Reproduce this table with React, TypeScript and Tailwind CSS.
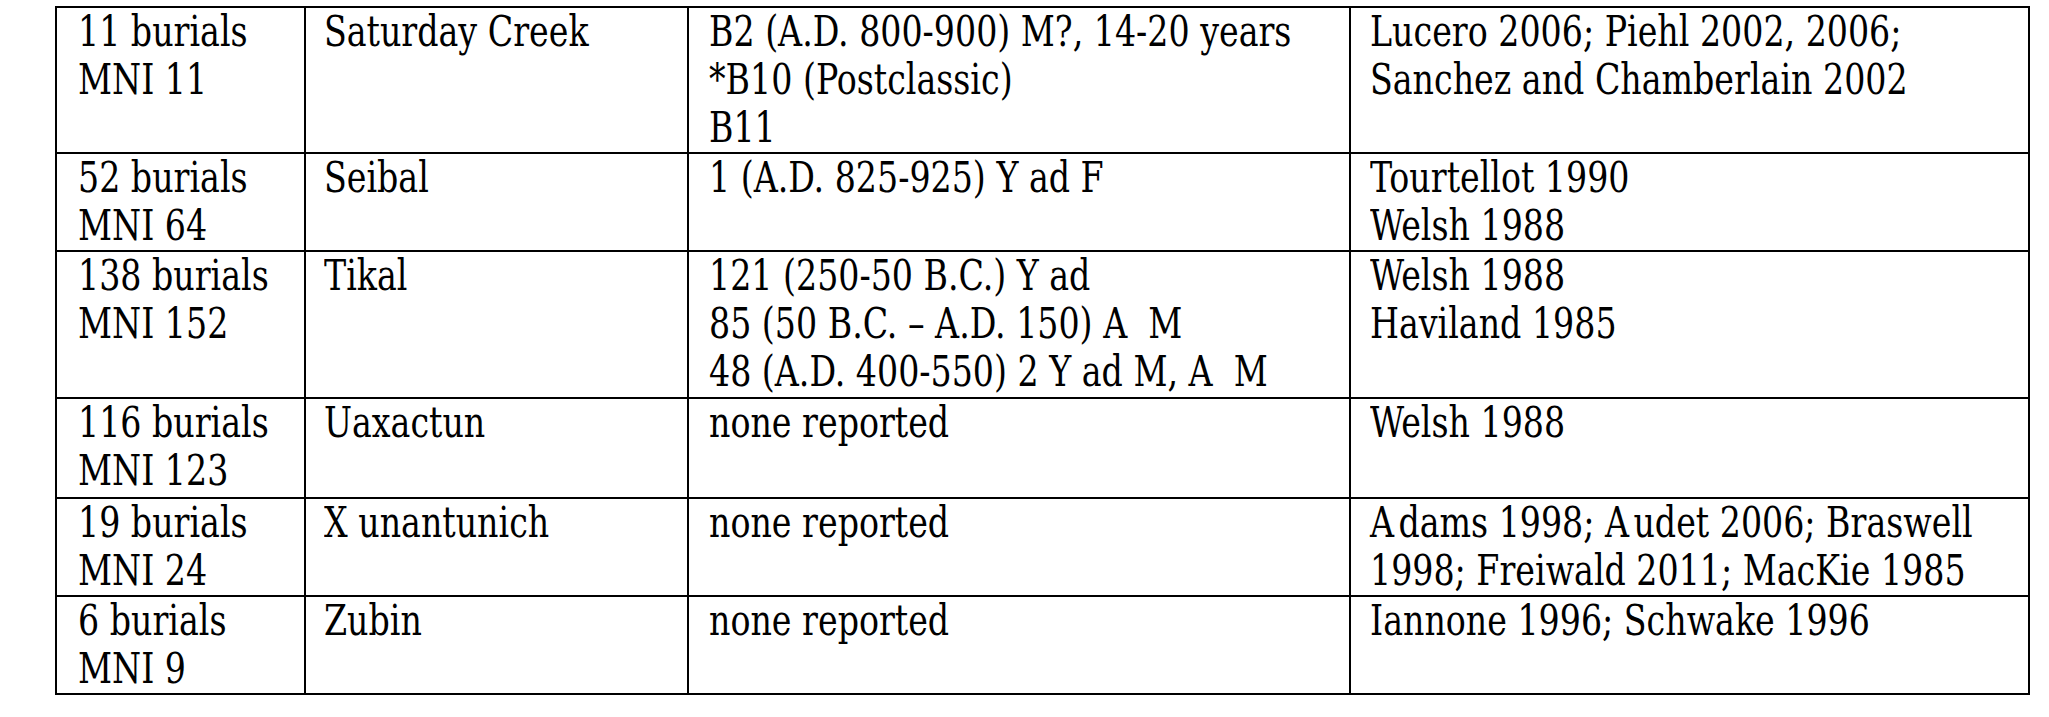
import React from "react";

type Cell = React.ReactNode[];
type Row = [Cell, Cell, Cell, Cell];

const A = ({ c }: { c: string }) => <span className="mr-[5px]">{c}</span>;

const rows: Row[] = [
  [
    ["11 burials", "MNI 11"],
    ["Saturday Creek"],
    ["B2 (A.D. 800-900) M?, 14-20 years", "*B10 (Postclassic)", "B11"],
    ["Lucero 2006; Piehl 2002, 2006;", "Sanchez and Chamberlain 2002"],
  ],
  [
    ["52 burials", "MNI 64"],
    ["Seibal"],
    ["1 (A.D. 825-925) Y ad F"],
    ["Tourtellot 1990", "Welsh 1988"],
  ],
  [
    ["138 burials", "MNI 152"],
    ["Tikal"],
    ["121 (250-50 B.C.) Y ad", "85 (50 B.C. – A.D. 150) A  M", "48 (A.D. 400-550) 2 Y ad M, A  M"],
    ["Welsh 1988", "Haviland 1985"],
  ],
  [
    ["116 burials", "MNI 123"],
    ["Uaxactun"],
    ["none reported"],
    ["Welsh 1988"],
  ],
  [
    ["19 burials", "MNI 24"],
    ["X unantunich"],
    ["none reported"],
    [
      <>
        <A c="A" />dams 1998; <A c="A" />udet 2006; Braswell
      </>,
      "1998; Freiwald 2011; MacKie 1985",
    ],
  ],
  [
    ["6 burials", "MNI 9"],
    ["Zubin"],
    ["none reported"],
    ["Iannone 1996; Schwake 1996"],
  ],
];

const colClass = [
  "w-[249px] pl-[21px]",
  "w-[383px] pl-[18px]",
  "w-[662px] pl-[20px]",
  "w-[679px] pl-[19px]",
];

const rowLines = [3, 2, 3, 2, 2, 2];
const rowPad = ["pb-0", "pb-0", "pb-[1px]", "pb-[2px]", "pb-0", "pb-0"];

export default function App() {
  return (
    <div className="w-[2049px] h-[717px] bg-white pl-[55px] pt-[6px] font-['DejaVu_Serif_Condensed','DejaVu_Serif',serif] text-[42px] leading-[48px] text-black">
      <div className="flex flex-col w-max border-t-2 border-l-2 border-black">
        {rows.map((row, ri) => (
          <div key={ri} className="flex">
            {row.map((cell, ci) => (
              <div
                key={ci}
                className={`${colClass[ci]} ${rowPad[ri]} box-border shrink-0 border-r-2 border-b-2 border-black`}
              >
                {cell.map((line, li) => (
                  <div
                    key={li}
                    className="whitespace-pre origin-left scale-x-[0.88] h-[48px]"
                  >
                    {line}
                  </div>
                ))}
                {Array.from({ length: rowLines[ri] - cell.length }).map((_, k) => (
                  <div key={`e${k}`} className="h-[48px]" />
                ))}
              </div>
            ))}
          </div>
        ))}
      </div>
    </div>
  );
}
